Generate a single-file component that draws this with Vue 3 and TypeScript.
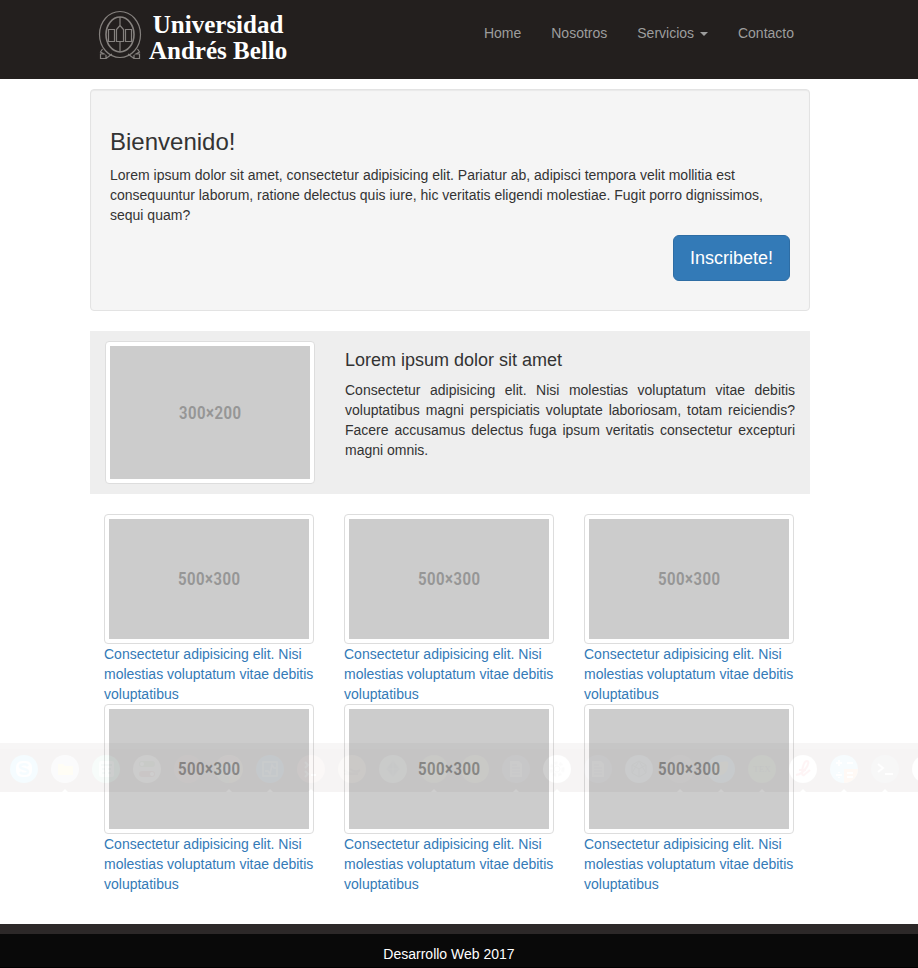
<script setup lang="ts">
interface Card {
  id: number
  size: string
  text: string
  strong: boolean
}

interface DockItem {
  color: string
  kind: string
  mark: boolean
}

const cards: Card[] = [1, 2, 3, 4, 5, 6].map((id) => ({
  id,
  size: '500×300',
  text: 'Consectetur adipisicing elit. Nisi molestias voluptatum vitae debitis voluptatibus',
  strong: id > 3,
}))

const dock: DockItem[] = [
  { color: '#58d0ff', kind: 'chat', mark: false },
  { color: '#c8c8d8', kind: 'folder', mark: true },
  { color: '#78d8b0', kind: 'sheet', mark: false },
  { color: '#d4d8ce', kind: 'toggles', mark: false },
  { color: '#905850', kind: 'plain', mark: false },
  { color: '#b09870', kind: 'wheel', mark: true },
  { color: '#4890c0', kind: 'chart', mark: true },
  { color: '#c08078', kind: 'shell', mark: true },
  { color: '#c0a080', kind: 'swirl', mark: false },
  { color: '#b0c0b8', kind: 'diamond', mark: false },
  { color: '#989870', kind: 'leaf', mark: true },
  { color: '#a0a070', kind: 'plain', mark: false },
  { color: '#807890', kind: 'doc', mark: true },
  { color: '#ffffff', kind: 'gear', mark: true },
  { color: '#807890', kind: 'doc', mark: false },
  { color: '#a8c0d0', kind: 'cube', mark: false },
  { color: '#807068', kind: 'swirl', mark: true },
  { color: '#80b0d0', kind: 'leaf', mark: true },
  { color: '#88a870', kind: 'tex', mark: true },
  { color: '#ffffff', kind: 'script', mark: true },
  { color: '#70d0f8', kind: 'calc', mark: true },
  { color: '#70717a', kind: 'terminal', mark: true },
  { color: '#ffffff', kind: 'plain', mark: false },
]
</script>

<template>
  <div class="page">
    <header class="topbar">
      <div class="container topbar-inner">
        <a class="brand" href="#" aria-label="Universidad Andrés Bello">
          <svg class="crest" viewBox="0 0 44 52" aria-hidden="true">
            <g fill="none" stroke="#85817e" stroke-width="1.2">
              <ellipse cx="22" cy="24.500" rx="20.500" ry="23" />
              <ellipse cx="22" cy="24.500" rx="14" ry="17.500" stroke-width="1.6" />
              <path d="M22 7v9M22 31.500V42M10.500 19.500h6v12h-6zM27.500 19.500h6v12h-6zM18.500 31.500V19.500L22 15.500l3.500 4v12z" />
              <path d="M4.500 39 2.500 42 6 44H2.500v4.500H8V45M8 48.500l6-4.500M39.500 39l2 3-3.500 2h3.500v4.500H36V45M36 48.500 30 44" />
            </g>
          </svg>
          <span class="brand-name"><span>Universidad</span><span>Andrés Bello</span></span>
        </a>
        <nav class="menu">
          <a href="#">Home</a>
          <a href="#">Nosotros</a>
          <a href="#">Servicios <span class="caret"></span></a>
          <a href="#">Contacto</a>
        </nav>
      </div>
    </header>

    <main class="container">
      <section class="well">
        <h1>Bienvenido!</h1>
        <p>Lorem ipsum dolor sit amet, consectetur adipisicing elit. Pariatur ab, adipisci tempora velit mollitia est consequuntur laborum, ratione delectus quis iure, hic veritatis eligendi molestiae. Fugit porro dignissimos, sequi quam?</p>
        <div class="actions"><button type="button">Inscribete!</button></div>
      </section>

      <section class="feature">
        <div class="thumb"><div class="placeholder tall">300×200</div></div>
        <div class="feature-text">
          <h2>Lorem ipsum dolor sit amet</h2>
          <p>Consectetur adipisicing elit. Nisi molestias voluptatum vitae debitis voluptatibus magni perspiciatis voluptate laboriosam, totam reiciendis? Facere accusamus delectus fuga ipsum veritatis consectetur excepturi magni omnis.</p>
        </div>
      </section>

      <section class="cards">
        <a v-for="card in cards" :key="card.id" class="card" href="#">
          <span class="thumb"><span class="placeholder" :class="{ strong: card.strong }">{{ card.size }}</span></span>
          <span>{{ card.text }}</span>
        </a>
      </section>
    </main>

    <footer class="footer"><p>Desarrollo Web 2017</p></footer>

    <svg class="dock" aria-hidden="true">
      <rect class="dock-bg" width="100%" height="49" />
      <rect class="dock-edge" width="100%" height="6" />
      <g v-for="(item, i) in dock" :key="i" :transform="`translate(${24 + i * 41} 26)`">
        <circle r="14" :fill="item.color" />
        <path v-if="item.mark" d="M-3 23 0 20l3 3z" fill="#fff" />
        <g v-if="item.kind === 'chat'">
          <rect x="-8" y="-8" width="16" height="16" rx="6" fill="#fff" />
          <path d="M4-3C2-6-4-5-4-2.500S4 0 4 2.500-2 6-4 3" fill="none" stroke="#58d0ff" stroke-width="2.500" />
        </g>
        <path v-else-if="item.kind === 'folder'" d="M-7-5h5l2 2h8v9H-7z" fill="#ffe850" />
        <g v-else-if="item.kind === 'sheet'">
          <rect x="-7" y="-8" width="15" height="16" rx="2" fill="#e8fff4" />
          <path d="M-5-4H6M-4 0h3M2 0h3M-4 4h3M2 4h3" stroke="#78c8a8" stroke-width="2" />
        </g>
        <g v-else-if="item.kind === 'toggles'">
          <rect x="-8" y="-8" width="16" height="6" rx="3" fill="#88a880" />
          <circle cx="-5" cy="-5" r="2" fill="#fff" />
          <rect x="-8" y="2" width="16" height="6" rx="3" fill="#b07070" />
          <circle cx="5" cy="5" r="2" fill="#fff" />
        </g>
        <g v-else-if="item.kind === 'wheel'">
          <path d="M0 0-12-7A14 14 0 0 1 12-7z" fill="#b08078" />
          <path d="M0 0v14A14 14 0 0 1-12-7z" fill="#88a080" />
          <circle r="6" fill="#80a0c8" stroke="#ddd" stroke-width="2" />
        </g>
        <path v-else-if="item.kind === 'chart'" d="M-7-7H7V7H-7zM-5 2h3l2 3 2-9 2 3h2" fill="none" stroke="#a0c8e0" stroke-width="1.500" />
        <path v-else-if="item.kind === 'shell'" d="m-6-7 3 3-3 3M-6 2l3 3-3 3M0 6h5" fill="none" stroke="#fff" stroke-width="2" />
        <path v-else-if="item.kind === 'swirl'" d="M-8 1Q0 8 8 1 3 4-2 0M-8 5H6" fill="none" stroke="#88705c" stroke-width="2" />
        <path v-else-if="item.kind === 'diamond'" d="m0-9 7 9-7 8-7-8zM-7 0H7M0-9V8" fill="#80908a" stroke="#a4b4ac" />
        <path v-else-if="item.kind === 'leaf'" d="M-7 6C-9-5 0-9 7-7 8 2 3 8-7 6z" fill="#c8c890" />
        <g v-else-if="item.kind === 'doc'">
          <path d="M-6-8h9l3 3V8H-6z" fill="#c0bcc8" />
          <path d="M-4-4h5M-4-1h8M-4 2h8M-4 5h8" stroke="#807890" />
        </g>
        <g v-else-if="item.kind === 'gear'" fill="none" stroke="#c8c8c8">
          <circle r="3" /><circle r="6" stroke-width="3" stroke-dasharray="3 2" />
        </g>
        <path v-else-if="item.kind === 'cube'" d="m0-8 7 4v8L0 8l-7-4v-8zM-7-4 0 0l7-4M0 0v8M-7 4 0-8 7 4" fill="none" stroke="#708490" />
        <text v-else-if="item.kind === 'tex'" y="3" text-anchor="middle" class="tex">TEX</text>
        <path v-else-if="item.kind === 'script'" d="M-7 6C2 5 8-8 4-8S-3 8 1 6t6-5M-4 1h7" fill="none" stroke="#f04858" stroke-width="2" />
        <g v-else-if="item.kind === 'calc'">
          <path d="M0 0h14A14 14 0 0 1 0 14z" fill="#ffa050" />
          <path d="M-8-6h6M-5-9v6M3-6h6M-8 6h6M-5 3v1M-5 8v1M3 4h6M3 8h6" stroke="#fff" stroke-width="2" />
        </g>
        <path v-else-if="item.kind === 'terminal'" d="m-7-5 5 4-5 4M0 5h8" fill="none" stroke="#fff" stroke-width="2" />
      </g>
    </svg>
  </div>
</template>

<style>
body {
  background: #fff;
}
</style>

<style scoped>
* {
  box-sizing: border-box;
}

.page {
  position: relative;
  font-family: "Liberation Sans", Arial, sans-serif;
  font-size: 14px;
  line-height: 20px;
  color: #333;
}

h1,
h2,
p {
  margin: 0 0 10px;
  font-weight: 400;
}

a {
  color: #337ab7;
  text-decoration: none;
}

.topbar,
main {
  padding-right: 18px;
}

.topbar {
  height: 79px;
  background: #231f1e;
}

.container {
  max-width: 720px;
  margin: 0 auto;
}

main.container {
  max-width: 738px;
}

.topbar-inner {
  display: flex;
  justify-content: space-between;
}

.brand {
  display: flex;
  gap: 7px;
  padding: 10px 0 0 8px;
  color: #fff;
}

.crest {
  width: 44px;
  height: 52px;
}

.brand-name {
  display: flex;
  flex-direction: column;
  align-items: center;
  padding-top: 2px;
  font: 700 25px/26px "Liberation Serif", "Times New Roman", serif;
}

.menu {
  display: flex;
  padding: 8px 1px 0 0;
}

.menu a {
  padding: 15px;
  color: #9d9d9d;
}

.caret {
  display: inline-block;
  margin-left: 2px;
  vertical-align: middle;
  border-top: 4px solid;
  border-right: 4px solid transparent;
  border-left: 4px solid transparent;
}

.well {
  margin: 10px 0 20px;
  padding: 39px 19px 29px;
  border: 1px solid #e3e3e3;
  border-radius: 4px;
  background: #f5f5f5;
  box-shadow: inset 0 1px 1px rgba(0, 0, 0, 0.05);
}

h1 {
  font-size: 24px;
  line-height: 26px;
}

.actions {
  display: flex;
  justify-content: flex-end;
}

button {
  padding: 10px 16px;
  border: 1px solid #2e6da4;
  border-radius: 6px;
  background: #337ab7;
  color: #fff;
  font: 18px/24px "Liberation Sans", Arial, sans-serif;
}

.feature {
  display: grid;
  grid-template-columns: 210px 1fr;
  gap: 30px;
  padding: 10px 15px;
  background: #eee;
}

.feature-text {
  padding-top: 10px;
  text-align: justify;
}

h2 {
  font-size: 18px;
  line-height: 19px;
}

.thumb {
  display: block;
  padding: 4px;
  border: 1px solid #ddd;
  border-radius: 4px;
  background: #fff;
}

.placeholder {
  display: flex;
  align-items: center;
  justify-content: center;
  height: 120px;
  background: #ccc;
  color: #969696;
  font: 500 18px/20px "Roboto Condensed", Roboto, sans-serif;
}

.tall {
  height: 133px;
}

.strong {
  color: #868686;
}

.cards {
  display: grid;
  grid-template-columns: repeat(3, 1fr);
  column-gap: 30px;
  padding: 20px 16px 30px 14px;
}

.card {
  display: block;
}

.footer {
  padding: 10px 20px 3px 0;
  border-top: 10px solid #2c2828;
  border-bottom: 1px solid #000;
  background: #090909;
  color: #fff;
  text-align: center;
}

.footer p {
  margin: 0;
}

.dock {
  position: absolute;
  top: 743px;
  left: 0;
  width: 100%;
  height: 49px;
  opacity: 0.05;
  pointer-events: none;
}

.dock-bg {
  fill: #5c4844;
}

.dock-edge {
  fill: #706c6c;
}

.tex {
  font: 9px "Liberation Serif", serif;
  fill: #405038;
}
</style>
